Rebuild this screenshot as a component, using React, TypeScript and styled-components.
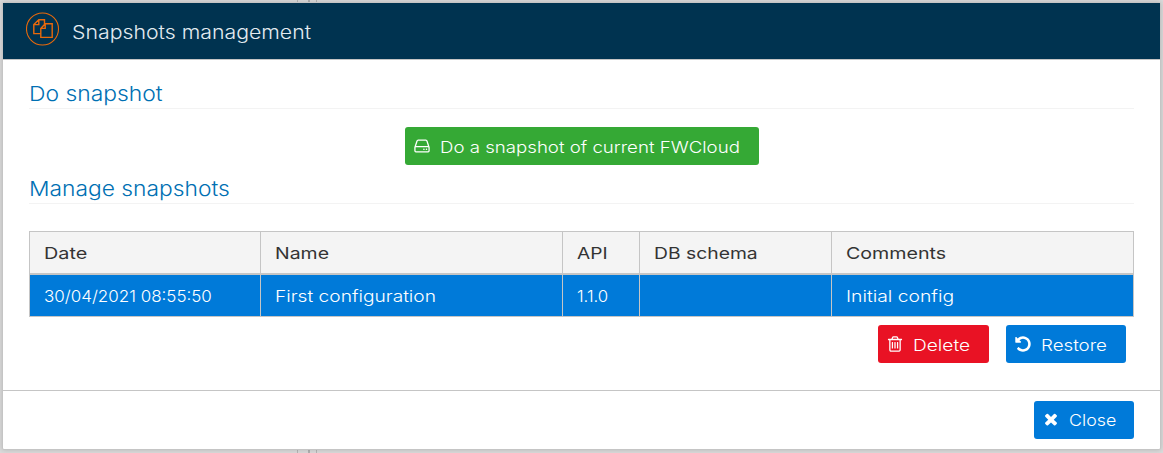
import React from "react";
import styled, { createGlobalStyle } from "styled-components";

const GlobalStyle = createGlobalStyle`
  * { box-sizing: border-box; }
  body { margin: 0; background: #dadada; overflow: hidden; }
`;

const Page = styled.div`
  position: relative;
  height: 453px;
  padding: 2px 2px 3px;
  background: #dadada;
  font-family: Inter, "Liberation Sans", sans-serif;
  font-size: 16.5px;
  font-weight: 300;
`;

/* Splitter of the page under the dialog */
const Splitter = styled.div`
  position: absolute;
  top: 0;
  bottom: 0;
  left: 297px;
  width: 20px;
  border: solid #b5b5b5;
  border-width: 0 1px;
  &::after {
    content: "";
    position: absolute;
    top: 0;
    bottom: 0;
    left: 10px;
    width: 2px;
    background: #b0b0b0;
  }
`;

const Dialog = styled.section`
  position: relative;
  display: flex;
  flex-direction: column;
  width: 1159px;
  height: 448px;
  background: #fff;
  border: 1px solid #c5c5c5;
  border-radius: 2px;
  box-shadow: 0 0 5px rgba(0, 0, 0, 0.16);
`;

const Header = styled.header`
  display: flex;
  align-items: center;
  gap: 12px;
  height: 57px;
  padding-left: 22.5px;
  background: #003350;
  border-bottom: 1px solid #c5c5c5;
  color: #e3ebf0;
`;

const Logo = styled.svg`
  width: 34px;
  height: 34px;
  margin-bottom: 5px;
  fill: none;
  stroke: #e8690b;
`;

const Label = styled.span<{ $stretch: number }>`
  display: inline-block;
  white-space: nowrap;
  transform: scaleX(${(p) => p.$stretch});
  transform-origin: left center;
`;

const Title = styled.h1`
  margin: 1px 0 0;
  font-size: 18.5px;
  font-weight: 300;
  line-height: 24px;
`;

const Content = styled.main`
  flex: 1;
  padding: 0 26px;
`;

const SectionTitle = styled.h2`
  height: 28px;
  margin: 0;
  border-bottom: 1px solid #f3f3f3;
  color: #0070b3;
  font-size: 20.5px;
  font-weight: 300;
  line-height: 25px;
`;

const SnapshotSection = styled.section`
  padding-top: 21px;
`;

const ManageSection = styled.section`
  padding-top: 11px;
`;

const CenterBar = styled.div`
  display: flex;
  justify-content: center;
  padding: 18px 0 0;
`;

const Button = styled.button<{ $color: string; $width: number }>`
  display: flex;
  align-items: center;
  gap: 9.5px;
  width: ${(p) => p.$width}px;
  height: 38px;
  padding: 2px 0 0 8px;
  border: 0;
  border-radius: 3px;
  background: ${(p) => p.$color};
  color: #fff;
  font: inherit;
  line-height: 24px;
`;

const Glyph = styled.svg<{ $shift: number }>`
  flex: none;
  width: 18px;
  height: 18px;
  margin: 0 0 3px ${(p) => p.$shift}px;
  fill: currentColor;
`;

const Table = styled.div`
  display: grid;
  grid-template-columns: 232px 302px 77px 192px 302px;
  width: 1105px;
  margin-top: 27px;
  border-top: 1px solid #c5c5c5;
`;

const Row = styled.div`
  display: contents;
`;

const Cell = styled.div`
  padding-left: 14px;
  border-right: 1px solid #c5c5c5;
  &:first-child { border-left: 1px solid #c5c5c5; }
`;

const HeadCell = styled(Cell)`
  height: 43px;
  border-bottom: 2px solid #c5c5c5;
  background: #f4f4f4;
  color: #333;
  font-weight: 400;
  line-height: 43px;
`;

const BodyCell = styled(Cell)`
  height: 42px;
  border-bottom: 1px solid #c5c5c5;
  background: #007ad9;
  color: #fff;
  line-height: 43px;
`;

const Actions = styled.div`
  display: flex;
  justify-content: flex-end;
  gap: 17px;
  padding: 8px 8px 0 0;
`;

const Footer = styled.footer`
  display: flex;
  justify-content: flex-end;
  height: 59px;
  padding: 10px 26px 0;
  border-top: 1px solid #c5c5c5;

  ${Button} {
    padding-top: 0;
  }
`;

const icons = {
  hdd: "M1168 1216q0 33-23.5 56.500t-56.500 23.500-56.500-23.500-23.500-56.500 23.500-56.500 56.500-23.500 56.500 23.500 23.500 56.500zm256 0q0 33-23.500 56.500t-56.500 23.500-56.500-23.500-23.500-56.500 23.500-56.500 56.500-23.500 56.500 23.500 23.500 56.500zm112 160v-320q0-13-9.500-22.500t-22.500-9.500h-1216q-13 0-22.500 9.500t-9.500 22.500v320q0 13 9.500 22.500t22.500 9.500h1216q13 0 22.500-9.500t9.500-22.500zm-1230-480h1180l-157-482q-4-13-16-21.500t-26-8.500h-782q-14 0-26 8.500t-16 21.500zm1358 160v320q0 66-47 113t-113 47h-1216q-66 0-113-47t-47-113v-320q0-25 16-75l197-606q17-53 63-86t101-33h782q55 0 101 33t63 86l197 606q16 50 16 75z",
  trash:
    "M704 736v576q0 14-9 23t-23 9h-64q-14 0-23-9t-9-23v-576q0-14 9-23t23-9h64q14 0 23 9t9 23zm256 0v576q0 14-9 23t-23 9h-64q-14 0-23-9t-9-23v-576q0-14 9-23t23-9h64q14 0 23 9t9 23zm256 0v576q0 14-9 23t-23 9h-64q-14 0-23-9t-9-23v-576q0-14 9-23t23-9h64q14 0 23 9t9 23zm128 724v-948h-896v948q0 22 7 40.500t14.500 27 10.500 8.500h832q3 0 10.500-8.500t14.500-27 7-40.500zm-672-1076h448l-48-117q-7-9-17-11h-317q-10 2-17 11zm928 32v64q0 14-9 23t-23 9h-96v948q0 83-47 143.500t-113 60.500h-832q-66 0-113-58.500t-47-141.500v-952h-96q-14 0-23-9t-9-23v-64q0-14 9-23t23-9h309l70-167q15-37 54-63t79-26h320q40 0 79 26t54 63l70 167h309q14 0 23 9t9 23z",
  undo: "M1664 896q0 156-61 298t-164 245-245 164-298 61q-172 0-327-72.500t-264-204.500q-7-10-6.500-22.500t8.500-20.500l137-138q10-9 25-9 16 2 23 12 73 95 179 147t225 52q104 0 198.500-40.500t163.500-109.500 109.500-163.500 40.500-198.500-40.500-198.500-109.500-163.500-163.500-109.500-198.500-40.500q-98 0-188 35.500t-160 101.500l137 138q31 30 14 69-17 40-59 40h-448q-26 0-45-19t-19-45v-448q0-42 40-59 39-17 69 14l130 129q107-101 244.500-156.500t284.500-55.500q156 0 298 61t245 164 164 245 61 298z",
  times:
    "M1490 1322q0 40-28 68l-136 136q-28 28-68 28t-68-28l-294-294-294 294q-28 28-68 28t-68-28l-136-136q-28-28-28-68t28-68l294-294-294-294q-28-28-28-68t28-68l136-136q28-28 68-28t68 28l294 294 294-294q28-28 68-28t68 28l136 136q28 28 28 68t-28 68l-294 294 294 294q28 28 28 68z",
};

type ActionProps = {
  icon: keyof typeof icons;
  color: string;
  width: number;
  stretch: number;
  shift?: number;
  children: string;
};

function ActionButton({ icon, color, width, stretch, shift = -0.5, children }: ActionProps) {
  return (
    <Button type="button" $color={color} $width={width}>
      <Glyph viewBox="0 0 1792 1792" $shift={shift}>
        <path d={icons[icon]} />
      </Glyph>
      <Label $stretch={stretch}>{children}</Label>
    </Button>
  );
}

const columns: [string, number][] = [
  ["Date", 1.2],
  ["Name", 1.18],
  ["API", 1.16],
  ["DB schema", 1.17],
  ["Comments", 1.19],
];

const snapshot: [string, number][] = [
  ["30/04/2021 08:55:50", 1.03],
  ["First configuration", 1.16],
  ["1.1.0", 1.02],
  ["", 1],
  ["Initial config", 1.17],
];

export default function App() {
  return (
    <Page>
      <GlobalStyle />
      <Splitter />
      <Dialog>
        <Header>
          <Logo viewBox="0 0 34 34">
            <circle cx="16.5" cy="17" r="16" strokeWidth="1.1" />
            <path
              strokeWidth="1.4"
              d="M14.500 21.600H7.800V12.600L12.800 7.800H18.500V12.400M12.800 7.800V12.600H7.800M14.800 16.400L19.200 11.800H26.200V25.400H14.800ZM14.800 16.400H19.200V11.800"
            />
          </Logo>
          <Title>
            <Label $stretch={1.15}>Snapshots management</Label>
          </Title>
        </Header>
        <Content>
          <SnapshotSection>
            <SectionTitle>
              <Label $stretch={1.115}>Do snapshot</Label>
            </SectionTitle>
            <CenterBar>
              <ActionButton icon="hdd" color="#35a935" width={354} stretch={1.13} shift={0.3}>
                Do a snapshot of current FWCloud
              </ActionButton>
            </CenterBar>
          </SnapshotSection>
          <ManageSection>
            <SectionTitle>
              <Label $stretch={1.112}>Manage snapshots</Label>
            </SectionTitle>
            <Table>
              <Row>
                {columns.map(([text, stretch]) => (
                  <HeadCell key={text}>
                    <Label $stretch={stretch}>{text}</Label>
                  </HeadCell>
                ))}
              </Row>
              <Row>
                {snapshot.map(([text, stretch], i) => (
                  <BodyCell key={i}>
                    <Label $stretch={stretch}>{text}</Label>
                  </BodyCell>
                ))}
              </Row>
            </Table>
            <Actions>
              <ActionButton icon="trash" color="#e91224" width={111} stretch={1.16}>
                Delete
              </ActionButton>
              <ActionButton icon="undo" color="#007ad9" width={120} stretch={1.135}>
                Restore
              </ActionButton>
            </Actions>
          </ManageSection>
        </Content>
        <Footer>
          <ActionButton icon="times" color="#007ad9" width={100} stretch={1.08}>
            Close
          </ActionButton>
        </Footer>
      </Dialog>
    </Page>
  );
}
